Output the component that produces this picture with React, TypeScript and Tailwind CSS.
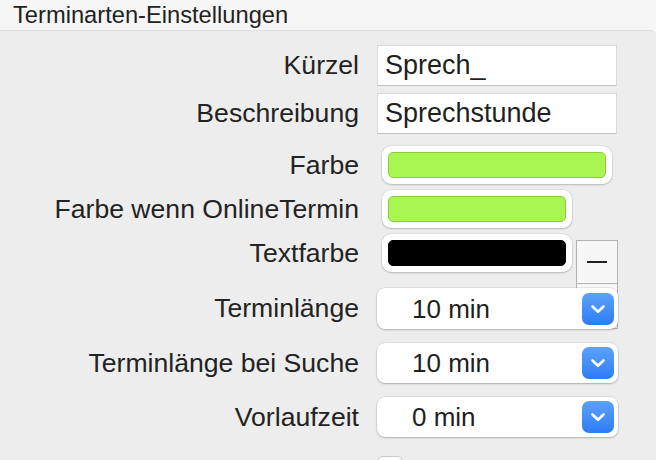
import React from 'react'

const font = { fontFamily: '"Liberation Sans", Arial, sans-serif' }

function Label({ children }: { children: React.ReactNode }) {
  return (
    <div className="w-[359px] shrink-0 text-right text-[26.6px] leading-none text-[#232323]">
      {children}
    </div>
  )
}

function TextField({ value }: { value: string }) {
  return (
    <div className="ml-[18px] flex h-full w-[240px] items-center border border-[#d9d9d9] border-b-[#c2c2c2] bg-white pl-[7px] text-[27px] leading-none text-[#1f1f1f]">
      {value}
    </div>
  )
}

function ColorWell({ color, width, border }: { color: string; width: string; border: string }) {
  return (
    <div
      className={`ml-[23px] h-full rounded-[9px] bg-white p-[6px] shadow-[0_0_0_0.5px_rgba(0,0,0,0.1),0_1px_2px_rgba(0,0,0,0.18)] ${width}`}
    >
      <div className={`h-full w-full rounded-[5px] border ${border}`} style={{ backgroundColor: color }} />
    </div>
  )
}

function Chevron() {
  return (
    <svg width="16" height="16" viewBox="0 0 16 16" fill="none">
      <path d="M2.5 5.5L8 10.8l5.5-5.3" stroke="white" strokeWidth="2.6" strokeLinecap="round" strokeLinejoin="round" />
    </svg>
  )
}

function Select({ value }: { value: string }) {
  return (
    <div className="relative z-10 ml-[18px] flex h-full w-[241px] items-center justify-between rounded-[8px] bg-white pl-[35px] pr-[4px] shadow-[0_0_0_0.5px_rgba(0,0,0,0.12),0_1px_2px_rgba(0,0,0,0.22)]">
      <span className="text-[26px] leading-none text-[#1f1f1f]">{value}</span>
      <div className="flex h-[32px] w-[32px] items-center justify-center rounded-[7px] bg-gradient-to-b from-[#5ca2fb] to-[#2c7cf4]">
        <Chevron />
      </div>
    </div>
  )
}

export default function App() {
  return (
    <div className="h-[460px] w-[656px] overflow-hidden bg-[#f6f6f6]" style={font}>
      <div className="flex h-[30px] items-center pl-[13px] pt-[2px] text-[23.7px] leading-none text-[#222]">
        Terminarten-Einstellungen
      </div>
      <div className="h-[430px] rounded-tr-[6px] border-t border-[#dfdfdf] bg-[#ededed]">
        <div className="mt-[14px] flex h-[41px] items-center">
          <Label>Kürzel</Label>
          <TextField value="Sprech_" />
        </div>
        <div className="mt-[7px] flex h-[41px] items-center">
          <Label>Beschreibung</Label>
          <TextField value="Sprechstunde" />
        </div>
        <div className="mt-[12px] flex h-[38px] items-center">
          <Label>Farbe</Label>
          <ColorWell color="#a9f552" width="w-[230px]" border="border-[#8ccd3c]" />
        </div>
        <div className="mt-[6px] flex h-[38px] items-center">
          <Label>Farbe wenn OnlineTermin</Label>
          <ColorWell color="#a9f552" width="w-[190px]" border="border-[#8ccd3c]" />
        </div>
        <div className="relative mt-[6px] flex h-[38px] items-center">
          <Label>Textfarbe</Label>
          <ColorWell color="#000000" width="w-[190px]" border="border-[#000]" />
          <div className="absolute left-[576px] top-[6px] flex h-[89px] w-[42px] flex-col border border-[#b3b3b3] bg-[#f7f7f7]">
            <div className="flex h-[43px] items-center justify-center border-b border-[#b3b3b3]">
              <div className="h-[2px] w-[20px] bg-[#222]" />
            </div>
            <div className="flex-1" />
          </div>
        </div>
        <div className="mt-[16px] flex h-[41px] items-center">
          <Label>Terminlänge</Label>
          <Select value="10 min" />
        </div>
        <div className="mt-[14px] flex h-[40px] items-center">
          <Label>Terminlänge bei Suche</Label>
          <Select value="10 min" />
        </div>
        <div className="mt-[14px] flex h-[40px] items-center">
          <Label>Vorlaufzeit</Label>
          <Select value="0 min" />
        </div>
        <div className="mt-[19px] flex items-start">
          <div className="w-[359px] shrink-0" />
          <div className="ml-[18px] h-[26px] w-[26px] rounded-[6px] border border-[#c9c9c9] bg-white" />
        </div>
      </div>
    </div>
  )
}
